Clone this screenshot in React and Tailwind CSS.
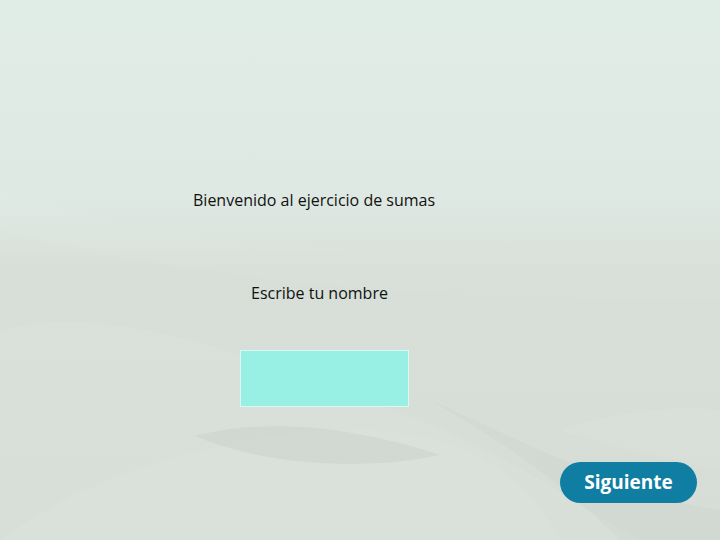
import React from 'react';

// Decorative wave layer behind the content
const Waves = () => (
    <svg className="absolute inset-0 w-full h-full" viewBox="0 0 720 540" preserveAspectRatio="none">
        <defs>
            <linearGradient id="bg" x1="0" y1="0" x2="0" y2="1">
                <stop offset="0" stopColor="#e0ece6" />
                <stop offset="0.36" stopColor="#dfe9e3" />
                <stop offset="0.5" stopColor="#d7dfd8" />
                <stop offset="1" stopColor="#d5ddd6" />
            </linearGradient>
        </defs>
        <rect width="720" height="540" fill="url(#bg)" />
        {/* soft light sweep from the left */}
        <path d="M0 330 C120 300 260 360 420 420 C520 460 600 520 640 540 L0 540 Z" fill="#ffffff" opacity="0.07" />
        <path d="M0 540 C80 480 200 440 330 430 C440 425 520 460 560 540 Z" fill="#ffffff" opacity="0.05" />
        {/* darker lens */}
        <path d="M195 436 C260 418 350 425 440 455 C360 472 260 464 195 436 Z" fill="#bcc7be" opacity="0.28" />
        {/* right side bands */}
        <path d="M430 400 C520 450 580 500 620 540 L720 540 L720 510 C640 500 540 450 430 400 Z" fill="#c9d2ca" opacity="0.3" />
        <path d="M560 430 C620 410 680 405 720 410 L720 470 C680 460 620 450 560 430 Z" fill="#ffffff" opacity="0.08" />
        <path d="M0 190 C150 240 300 260 720 250 L720 300 C400 300 200 280 0 230 Z" fill="#ffffff" opacity="0.05" />
    </svg>
);

const App = () => {
    return (
        <div className="relative w-[720px] h-[540px] overflow-hidden bg-[#dbe4de]" style={{ fontFamily: '"Open Sans", sans-serif' }}>
            <Waves />

            <div className="relative flex flex-col items-start pt-[189px]">
                <p className="ml-[193px] text-[16px] leading-[22px] text-[#111]">Bienvenido al ejercicio de sumas</p>
                <p className="ml-[251px] mt-[71px] text-[16px] leading-[22px] text-[#111]">Escribe tu nombre</p>

                {/* name input */}
                <input
                    type="text"
                    className="ml-[240px] mt-[46px] w-[169px] h-[57px] bg-[#98efe4] border border-[#d9f8f3] outline-none"
                />

                <div className="self-stretch flex justify-end mt-[55px] pr-[23px]">
                    <button className="w-[137px] h-[41px] rounded-full bg-[#0f7ea2] text-white font-bold text-[19px] leading-none">
                        Siguiente
                    </button>
                </div>
            </div>
        </div>
    );
};

export default App;
